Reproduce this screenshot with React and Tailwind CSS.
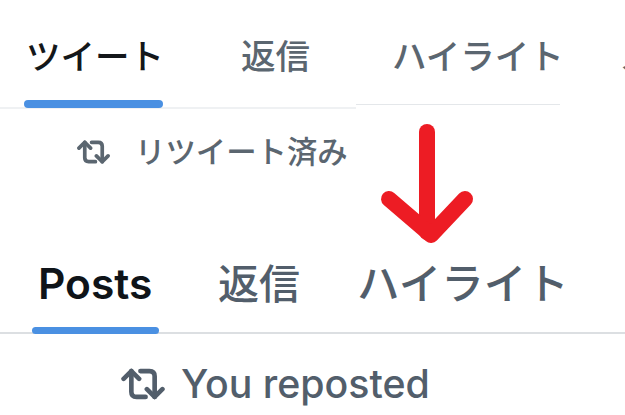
import React from 'react';

const FONT = 'font-["Inter","Noto_Sans_CJK_JP",sans-serif]';

const RepostIcon = ({ className }) => (
  <svg viewBox="0 0 34 26" fill="none" stroke="currentColor" strokeLinecap="round" strokeLinejoin="round" className={className}>
    <path d="M2 9 L8 3 L14 9" />
    <path d="M8 3 V19 Q8 23 12 23 H19" />
    <path d="M15 3 H22 Q26 3 26 7 V23" />
    <path d="M20 17 L26 23 L32 17" />
  </svg>
);

const App = () => {
  return (
    <div className={`relative w-[625px] h-[415px] overflow-hidden bg-white ${FONT}`}>
      {/* before */}
      <div className="flex items-start h-[123px]">
        <div className="relative shrink-0 w-[356px] h-[109px] border-b-2 border-[#eff1f3] flex pl-[26px] pt-[32px] whitespace-nowrap">
          <span className="shrink-0 w-[215px] text-[34.5px] leading-[50px] font-medium text-[#14171a]">ツイート</span>
          <span className="text-[34.5px] leading-[50px] font-medium text-[#5b6670]">返信</span>
          <div className="absolute left-[24px] bottom-[-1px] w-[139px] h-[8px] rounded-full bg-[#4a90e2]" />
        </div>
        <div className="shrink-0 w-[204px] h-[105px] border-b border-[#e4e7ea] pl-[36px] pt-[32px] whitespace-nowrap">
          <span className="text-[34.5px] leading-[50px] font-medium text-[#5b6670]">ハイライト</span>
        </div>
        <span className="shrink-0 ml-[59px] pt-[32px] text-[34.5px] leading-[50px] font-medium whitespace-nowrap text-[#5b6670]">メディア</span>
      </div>
      <div className="flex items-center h-[58px] pl-[77px] gap-[25px] text-[#5b6670]">
        <RepostIcon className="w-[33px] h-[26px] stroke-[3.8]" />
        <span className="text-[30.4px] leading-[40px] font-medium">リツイート済み</span>
      </div>

      {/* after */}
      <div className="relative flex items-center h-[93px] mt-[60px] pl-[38px] pb-[5px] border-b-2 border-[#dcdfe2] text-[#525e6b] whitespace-nowrap">
        <span className="shrink-0 w-[180px] text-[42.5px] leading-[50px] font-semibold text-[#0f1419]">Posts</span>
        <span className="shrink-0 w-[141px] text-[41px] leading-[50px] font-medium">返信</span>
        <span className="text-[42.5px] leading-[50px] font-medium ml-[-2px]">ハイライト</span>
        <div className="absolute left-[32px] bottom-[-2px] w-[127px] h-[7px] rounded-full bg-[#4a90e2]" />
      </div>
      <div className="flex items-center h-[50px] mt-[25px] pl-[121px] gap-[16px] text-[#525e6b]">
        <RepostIcon className="w-[44px] h-[34px] stroke-[3.6]" />
        <span className="text-[39.3px] leading-[50px] font-medium">You reposted</span>
      </div>

      {/* red arrow overlay */}
      <svg viewBox="0 0 625 415" className="absolute inset-0 w-[625px] h-[415px]" fill="none" stroke="#ed1c24" strokeLinecap="round" strokeLinejoin="round">
        <path d="M427 132 V232" strokeWidth="16" />
        <path d="M389 199 L431 235 L465 199" strokeWidth="16" />
      </svg>
    </div>
  );
};

export default App;
